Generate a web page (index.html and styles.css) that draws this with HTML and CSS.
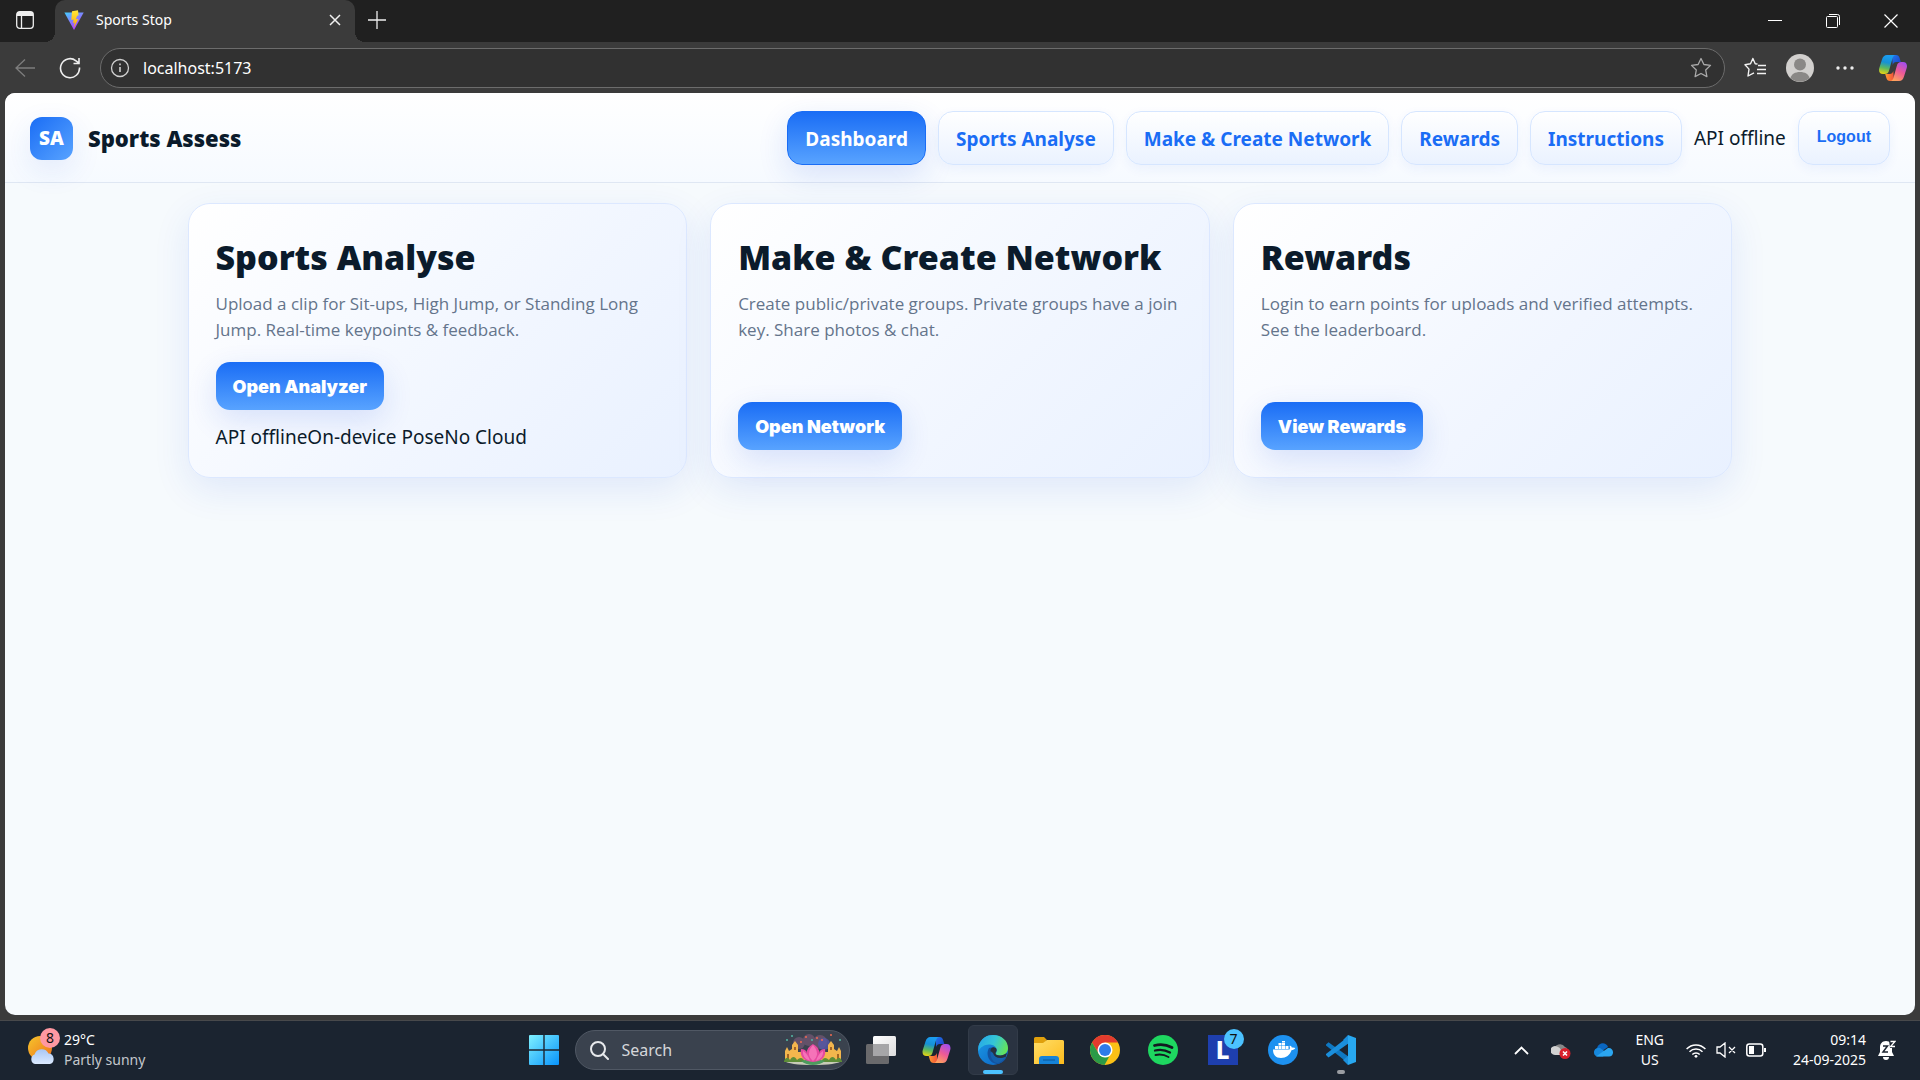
FILE: index.html
```html
<!DOCTYPE html>
<html lang="en">
<head>
<meta charset="utf-8">
<meta name="viewport" content="width=device-width, initial-scale=1">
<title>Sports Stop</title>
<link rel="stylesheet" href="styles.css">
</head>
<body class="desktop">
<svg class="defs" aria-hidden="true">
  <defs>
    <linearGradient id="cpA" x1="0.3" y1="0" x2="0.1" y2="1"><stop offset="0" stop-color="#1b9df0"/><stop offset=".35" stop-color="#1691d6"/><stop offset=".65" stop-color="#5cb860"/><stop offset="1" stop-color="#f5d60b"/></linearGradient>
    <linearGradient id="cpB" x1="0.8" y1="0" x2="0.3" y2="1"><stop offset="0" stop-color="#a24df0"/><stop offset=".5" stop-color="#ee5a96"/><stop offset="1" stop-color="#ffa45c"/></linearGradient>
    <linearGradient id="cpC" x1="0" y1="0" x2="1" y2="1"><stop offset="0" stop-color="#2277ee"/><stop offset="1" stop-color="#1b3fc4"/></linearGradient>
    <linearGradient id="cpD" x1="0" y1="0" x2="1" y2="0"><stop offset="0" stop-color="#ff9a2e"/><stop offset="1" stop-color="#f2503c"/></linearGradient>
    <symbol id="copilot" viewBox="0 0 28 26">
      <path fill="url(#cpC)" d="M13 0h4c2 0 3 1 3.600 3l1.200 4h-4.500c-2 0-3 1-3.600 3z"/>
      <path fill="url(#cpD)" d="M15 26h-4c-2 0-3-1-3.600-3l-1.200-4h4.500c2 0 3-1 3.600-3z"/>
      <path fill="url(#cpA)" d="M8 0h9c-2 0-3 1.300-3.700 4l-3.100 11c-.8 3-2 4-4.500 4H4c-3.300 0-4.600-2.600-3.700-6L3 4.500C3.900 1.500 5.500 0 8 0z"/>
      <path fill="url(#cpB)" d="M20 26h-9c2 0 3-1.300 3.700-4l3.100-11c.8-3 2-4 4.500-4H24c3.300 0 4.600 2.600 3.700 6L25 21.500c-.9 3-2.500 4.500-5 4.500z"/>
    </symbol>
    <linearGradient id="vite" x1="0" y1="0" x2=".6" y2="1"><stop offset="0" stop-color="#41d1ff"/><stop offset="1" stop-color="#bd34fe"/></linearGradient>
    <linearGradient id="bolt" x1="0" y1="0" x2="0" y2="1"><stop offset="0" stop-color="#ffe83a"/><stop offset="1" stop-color="#ffa800"/></linearGradient>
    <linearGradient id="win" x1="0" y1="0" x2="1" y2="1"><stop offset="0" stop-color="#7ff1ff"/><stop offset="1" stop-color="#0893fb"/></linearGradient>
    <linearGradient id="edgeTop" x1="0" y1=".3" x2="1" y2=".6"><stop offset="0" stop-color="#27a9e8"/><stop offset=".5" stop-color="#35c6d6"/><stop offset="1" stop-color="#66e455"/></linearGradient>
    <linearGradient id="edgeMid" x1="0" y1="0" x2="1" y2="1"><stop offset="0" stop-color="#1c9ce8"/><stop offset="1" stop-color="#0b60c0"/></linearGradient>
    <linearGradient id="sun" x1="0" y1="0" x2="1" y2="1"><stop offset="0" stop-color="#f5c62c"/><stop offset="1" stop-color="#f0701c"/></linearGradient>
    <linearGradient id="cloud" x1="0" y1="0" x2="0" y2="1"><stop offset="0" stop-color="#a8c6f5"/><stop offset="1" stop-color="#dceaff"/></linearGradient>
    <linearGradient id="folder" x1="0" y1="0" x2="1" y2="1"><stop offset="0" stop-color="#ffde68"/><stop offset="1" stop-color="#fdbb1c"/></linearGradient>
    <linearGradient id="pane" x1="0" y1="0" x2="1" y2="1"><stop offset="0" stop-color="#fff"/><stop offset="1" stop-color="#dcdcdc"/></linearGradient>
  </defs>
</svg>

<div class="browser">
  <div class="tabs">
    <button class="icon-btn workspace" aria-label="Tab actions"><svg width="18" height="18" viewBox="0 0 18 18" fill="none" stroke="#eee" stroke-width="1.300"><rect x=".7" y=".7" width="16.600" height="16.600" rx="3"/><path d="M1 3h16" stroke-width="4"/><path d="M5.500 4v13"/></svg></button>
    <div class="tab">
      <svg width="20" height="20" viewBox="0 0 20 20"><path fill="url(#vite)" d="M.4 2.400 10 20l9.700-17.600z"/><path fill="url(#bolt)" d="M14 .2 8 1.300 7.300 10l2.300-.5-.6 3.500 1.700-.4-.9 5.200 4.600-9-2.500.5 1.200-3.600 1.500-.3z"/></svg>
      <span class="tab-title">Sports Stop</span>
      <button class="icon-btn" aria-label="Close tab"><svg width="12" height="12" viewBox="0 0 12 12" stroke="#f0f0f0" stroke-width="1.500"><path d="m1 1 10 10M11 1 1 11"/></svg></button>
    </div>
    <button class="icon-btn new-tab" aria-label="New tab"><svg width="18" height="18" viewBox="0 0 18 18" stroke="#eee" stroke-width="1.300"><path d="M9 0v18M0 9h18"/></svg></button>
    <div class="window-controls">
      <button class="icon-btn" aria-label="Minimize"><svg width="14" height="14" viewBox="0 0 14 14" stroke="#fff"><path d="M0 6.500h14"/></svg></button>
      <button class="icon-btn" aria-label="Restore"><svg width="14" height="14" viewBox="0 0 14 14" fill="none" stroke="#fff"><rect x=".5" y="2.500" width="11" height="11" rx="1"/><path d="M3 .5h8.500a2 2 0 0 1 2 2V11"/></svg></button>
      <button class="icon-btn" aria-label="Close"><svg width="14" height="14" viewBox="0 0 14 14" stroke="#fff" stroke-width="1.200"><path d="m.5.500 13 13M13.500.500l-13 13"/></svg></button>
    </div>
  </div>

  <div class="toolbar">
    <button class="icon-btn" aria-label="Back"><svg width="20" height="20" viewBox="0 0 20 20" fill="none" stroke="#7d7d7d" stroke-width="1.300"><path d="M20 10H1M10 1.500 1 10l9 8.500"/></svg></button>
    <button class="icon-btn" aria-label="Refresh"><svg width="22" height="22" viewBox="0 0 22 22" fill="none" stroke="#eee" stroke-width="1.600"><path d="M20.500 10.500A9.500 9.500 0 1 1 17 3.800l3 2.400M20 1v5.500h-5.500"/></svg></button>
    <div class="address">
      <svg width="20" height="20" viewBox="0 0 20 20" fill="none" stroke="#d0d0d0" stroke-width="1.300"><circle cx="10" cy="10" r="8.500"/><path d="M10 9v5M10 5.500v1.800" stroke-width="1.600"/></svg>
      <input class="url" aria-label="Address" value="localhost:5173">
      <svg width="22" height="22" viewBox="0 0 22 22" fill="none" stroke="#aaa" stroke-width="1.300" stroke-linejoin="round"><path d="m11 1.500 2.900 6 6.600.9-4.800 4.600 1.200 6.600L11 16.500l-5.900 3.100L6.300 13 1.500 8.400l6.600-.9z"/></svg>
    </div>
    <div class="toolbar-actions">
      <button class="icon-btn" aria-label="Favorites"><svg width="22" height="22" viewBox="0 0 22 22" fill="none" stroke="#f2f2f2" stroke-width="1.400" stroke-linejoin="round"><path d="m13.500 7-2.300-.2L8.900 1.500 6.500 6.800l-5.500.9 4 4.400-1 6.900 6-3.200M14 8.500h8M13 12.500h9M13 16.500h9"/></svg></button>
      <button class="icon-btn" aria-label="Profile"><svg width="28" height="28" viewBox="0 0 28 28"><circle cx="14" cy="14" r="14" fill="#d2d0ce"/><circle cx="14" cy="10.500" r="6" fill="#8a8886"/><path fill="#8a8886" d="M4.500 24c1-4 4.500-6 9.500-6s8.500 2 9.500 6a14 14 0 0 1-19 0z"/></svg></button>
      <button class="icon-btn" aria-label="Settings and more"><svg width="18" height="4" viewBox="0 0 18 4" fill="#eee"><circle cx="2" cy="2" r="1.700"/><circle cx="9" cy="2" r="1.700"/><circle cx="16" cy="2" r="1.700"/></svg></button>
      <button class="icon-btn" aria-label="Copilot"><svg width="28" height="26"><use href="#copilot"/></svg></button>
    </div>
  </div>

  <div class="page">
    <header class="site-header">
      <div class="brand"><span class="logo">SA</span><span>Sports Assess</span></div>
      <nav class="nav">
        <a class="nav-link active" href="#dashboard">Dashboard</a>
        <a class="nav-link" href="#analyse">Sports Analyse</a>
        <a class="nav-link" href="#network">Make &amp; Create Network</a>
        <a class="nav-link" href="#rewards">Rewards</a>
        <a class="nav-link" href="#instructions">Instructions</a>
        <span>API offline</span>
        <button class="nav-link logout">Logout</button>
      </nav>
    </header>
    <main class="cards">
      <section class="card">
        <h2>Sports Analyse</h2>
        <p>Upload a clip for Sit-ups, High Jump, or Standing Long Jump. Real-time keypoints &amp; feedback.</p>
        <button class="cta">Open Analyzer</button>
        <div class="badges"><span>API offline</span><span>On-device Pose</span><span>No Cloud</span></div>
      </section>
      <section class="card">
        <h2>Make &amp; Create Network</h2>
        <p>Create public/private groups. Private groups have a join key. Share photos &amp; chat.</p>
        <button class="cta">Open Network</button>
      </section>
      <section class="card">
        <h2>Rewards</h2>
        <p>Login to earn points for uploads and verified attempts. See the leaderboard.</p>
        <button class="cta">View Rewards</button>
      </section>
    </main>
  </div>
</div>

<footer class="taskbar">
  <div class="weather">
    <div class="badged">
      <svg width="28" height="28" viewBox="0 0 28 28"><circle cx="12" cy="12" r="12" fill="url(#sun)"/><path fill="url(#cloud)" d="M7 28a5 5 0 0 1-.5-9.500 7.500 7.500 0 0 1 14-1A5.400 5.400 0 0 1 22 28z"/></svg>
      <span class="badge pink">8</span>
    </div>
    <div class="weather-text"><span>29°C</span><span class="dim">Partly sunny</span></div>
  </div>
  <div class="apps">
    <button class="app" aria-label="Start"><svg width="30" height="30" viewBox="0 0 30 30"><path fill="url(#win)" d="M1 0h13.300v14.300H0V1a1 1 0 0 1 1-1zM15.700 0H29a1 1 0 0 1 1 1v13.300H15.700zM0 15.700h14.300V30H1a1 1 0 0 1-1-1zM15.700 15.700H30V29a1 1 0 0 1-1 1H15.700z"/></svg></button>
    <label class="search">
      <svg width="19" height="19" viewBox="0 0 19 19" fill="none" stroke="#e8eaed" stroke-width="2" stroke-linecap="round"><circle cx="8" cy="8" r="7"/><path d="m13 13 5 5"/></svg>
      <input type="text" placeholder="Search" aria-label="Search">
      <svg width="58" height="32" viewBox="0 0 58 32">
        <g fill="#7a5a78" opacity=".65"><circle cx="15" cy="9" r="6"/><circle cx="25" cy="6" r="6"/><circle cx="36" cy="8" r="7"/></g>
        <circle cx="40" cy="10" r="6" fill="#5557a8" opacity=".8"/>
        <ellipse cx="29" cy="27.500" rx="27" ry="3.500" fill="#c8cbb7"/>
        <path fill="#f3b64d" d="M1 27V17l2-4 2 4 3-2v-4l3-4 3 4v16zM57 27V17l-2-4-2 4-3-2v-4l-3-4-3 4v16z"/>
        <path fill="#f3b64d" d="M13 27v-9h8v9zM37 27v-9h8v9z"/>
        <path fill="#a56424" d="M10 13h2v3h-2zM46 13h2v3h-2zM3 20h2v5H3zM53 20h2v5h-2z"/>
        <path fill="#5d8d38" d="M0 27c2-4 4-4 6-1 2-4 5-4 7 0 3-3 6-3 8 2H0zM58 27c-2-4-4-4-6-1-2-4-5-4-7 0-3-3-6-3-8 2h21z"/>
        <path fill="#4d9b5e" d="M17 27q12-4 24 0-5 4-12 4t-12-4z"/>
        <path fill="#e64aa0" d="M29 28Q15 27 17 15q5 0 6 4-1-5 6-9 7 4 6 9 1-4 6-4 2 12-12 13z"/>
        <path fill="#f573b8" d="M29 27q-8-7 0-16 8 9 0 16zM19 17q-1 7 7 10-2-7-7-10zM39 17q1 7-7 10 2-7 7-10z"/>
        <g fill="#f06a50"><circle cx="17" cy="8" r="1"/><circle cx="22" cy="3" r="1"/><circle cx="33" cy="4" r="1"/><circle cx="47" cy="1" r="1"/><circle cx="38" cy="6" r="1"/></g>
        <g fill="#53b9a4"><circle cx="8" cy="2" r="1"/><circle cx="28" cy="6" r="1"/><circle cx="3" cy="6" r="1"/><circle cx="56" cy="6" r="1"/></g>
      </svg>
    </label>
    <button class="app" aria-label="Task view"><svg width="30" height="28" viewBox="0 0 30 28"><rect y="8" width="23" height="20" rx="1.500" fill="#6a6a6c"/><rect x="7" width="23" height="20" rx="1.500" fill="url(#pane)"/><path fill="#a6a6a8" d="M7 8h16v12H7z"/></svg></button>
    <button class="app" aria-label="Copilot"><svg width="29" height="26"><use href="#copilot"/></svg></button>
    <button class="app running" aria-label="Microsoft Edge"><svg width="30" height="30" viewBox="0 0 30 30"><circle cx="15" cy="15" r="15" fill="url(#edgeMid)"/><path fill="#14529f" d="M11 13c-4 7 1 16 9 16 4-1 7-4 8-6-6 2-11 0-13-4-1-2-1-4 1-7z"/><path fill="url(#edgeTop)" d="M.5 11C3 3 9 0 15 0c9 0 15 6 15 13 0 5-4 7.500-8 7.500-3 0-5-1.200-4-2.500 2-3 0-8-6-8.500C7 9 2.500 12 .3 16z"/><path fill="#27303d" d="M12.500 15c1-4 6-3.500 6.200 0 .1 1.500-1.200 2.200-1.200 3.200 0 1.800 4 3 7.500 1.800l4-2-1.500 4.500c-6 3.500-15.500-.5-15-7.500z"/><path fill="#1460ad" d="M15 18c1.500 5 7 6.500 12.800 3.700C25 26 21 28 19 28c-5-1-7-7-6.500-12z"/></svg></button>
    <button class="app" aria-label="File Explorer"><svg width="30" height="27" viewBox="0 0 30 27"><path fill="#e0a00c" d="M0 1.500A1.500 1.500 0 0 1 1.500 0H10l3 3-3 4H0z"/><path fill="url(#folder)" d="M0 6h9l4-3h15.500A1.500 1.500 0 0 1 30 4.500V27H0z"/><path fill="#1683d8" d="M5 27v-5a3 3 0 0 1 3-3h14a3 3 0 0 1 3 3v5z"/><path stroke="#0b5798" d="M9 23h12"/></svg></button>
    <button class="app" aria-label="Google Chrome"><svg width="30" height="30" viewBox="0 0 30 30"><circle cx="15" cy="15" r="15" fill="#fbc116"/><path fill="#e33b2e" d="M2 7.500A15 15 0 0 1 28 7.500H15L9 19z"/><path fill="#2b9a47" d="M2 7.500 9 19q3 4 10 3l-4.500 8A15 15 0 0 1 2 7.500z"/><circle cx="15" cy="15" r="7.500" fill="#fff"/><circle cx="15" cy="15" r="6" fill="#2f7bea"/></svg></button>
    <button class="app wide" aria-label="Spotify"><svg width="30" height="30" viewBox="0 0 30 30" fill="none" stroke="#121a20" stroke-linecap="round"><circle cx="15" cy="15" r="15" fill="#1ed760" stroke="none"/><path d="M6.500 10.500q9-2.500 17.500 2" stroke-width="2.800"/><path d="M7 15.500q8-2 15 2" stroke-width="2.300"/><path d="M7.500 20q7-1.500 13 2" stroke-width="1.900"/></svg></button>
    <button class="app wide" aria-label="L"><span class="badged"><span class="letter">L</span><span class="badge blue">7</span></span></button>
    <button class="app wide" aria-label="Docker"><svg width="30" height="30" viewBox="0 0 30 30"><circle cx="15" cy="15" r="15" fill="#1d91f0"/><path fill="#fff" d="M5 14.500h16.500c.6-1 .5-2.600 0-3.500 1-.8 2 .3 2.300 1.500 1.500-.3 2.700 0 3.500.6-.8 1.600-2.200 2-3.600 2-2 5.300-5.500 7.900-10.700 7.900-5.300 0-8-3-8-8.500zM7 11h3v3H7zM10.500 11h3v3h-3zM14 11h3v3h-3zM17.500 11h3v3h-3zM10.500 8h3v2.600h-3zM14 8h3v2.600h-3zM14 6h3v1.600h-3z"/></svg></button>
    <button class="app idle" aria-label="Visual Studio Code"><svg width="30" height="30" viewBox="0 0 30 30"><path fill="#0f78c2" d="m0 9.500 2.500-2.300L23 22v7L0 10.500z"/><path fill="#1b8fdc" d="m0 20 2.500 2.500L23 8V1L0 19z"/><path fill="#28a8f0" d="m22 0 8 3v24l-8 3z"/><path fill="#1b8fdc" d="m22 0-5 5 5 4zM22 30l-5-5 5-4z"/></svg></button>
  </div>
  <div class="tray">
    <svg width="15" height="9" viewBox="0 0 15 9" fill="none" stroke="#fff" stroke-width="1.800"><path d="m1 8 6.500-6.500L14 8"/></svg>
    <svg width="20" height="17" viewBox="0 0 20 17"><path fill="#888" d="M3 8a6 6 0 0 1 11-3c3 1 3 4 2 7H9z"/><path fill="#d2d2d2" d="M4 13a4.500 4.500 0 1 1 2-8.500Q9 5 10 8l3 5z"/><circle cx="14" cy="11.500" r="5.500" fill="#d8202b"/><path stroke="#fff" stroke-width="1.500" d="m12 9.500 4 4m0-4-4 4"/></svg>
    <svg width="20" height="14" viewBox="0 0 20 14"><path fill="#0a66c0" d="M4 5C6-1 13-1 15 4l-6 4z"/><path fill="#1688dc" d="M4 13.500a4.500 4.500 0 1 1 3-8.500l7 5-4 3.500z"/><path fill="#2ba6f0" d="M3 13.500 15 5c6-1 7 8.500 1 8.500z"/></svg>
    <div class="stack center"><span>ENG</span><span>US</span></div>
    <div class="status">
      <svg width="20" height="15" viewBox="0 0 20 15" fill="none" stroke="#fff" stroke-width="1.500"><path d="M.6 6a13 13 0 0 1 18.800 0M3.500 8.800a9.200 9.200 0 0 1 13 0M6.300 11.500a5.200 5.200 0 0 1 7.400 0"/><circle cx="10" cy="13.300" r="1.400" fill="#fff" stroke="none"/></svg>
      <svg width="20" height="16" viewBox="0 0 20 16" fill="none" stroke="#fff" stroke-width="1.300"><path d="M1 5h3l5-4v14l-5-4H1zM13 5l6 6m0-6-6 6"/></svg>
      <svg width="20" height="14" viewBox="0 0 20 14" fill="none" stroke="#fff" stroke-width="1.500"><rect x=".8" y="1" width="16" height="12" rx="2.500"/><path d="M19 5v4" stroke-width="2"/><path fill="#fff" stroke="none" d="M3 3h5v8H3z"/></svg>
    </div>
    <div class="stack end"><span>09:14</span><span>24-09-2025</span></div>
    <svg width="18" height="20" viewBox="0 0 18 20"><path fill="#fff" d="M8 1C4 1 2 4 2 7v5l-2 4h16l-2-4V7c0-3-2-6-6-6zM5 17h6a3 3 0 0 1-6 0z"/><path fill="#1c2430" d="M11 0h7v8h-6z"/><path fill="none" stroke="#1c2430" stroke-width="1.500" d="M5 6h4.500L5 12h5"/><path fill="none" stroke="#fff" stroke-width="1.300" d="M12.500 1.500H17l-4.500 5H17"/></svg>
  </div>
</footer>
</body>
</html>
```

FILE: styles.css
```css
* { box-sizing: border-box; }

body.desktop {
  margin: 0;
  min-height: 100vh;
  display: flex;
  flex-direction: column;
  font-family: "Noto Sans", "Open Sans", sans-serif;
  color: #0b1b2b;
  background: #3b3b3b;
}

button, input { font: inherit; }
.defs { position: absolute; width: 0; height: 0; }
svg { display: block; flex: none; }

.icon-btn {
  display: grid;
  place-items: center;
  padding: 0;
  border: 0;
  background: none;
}

/* Browser window */
.browser {
  flex: 1;
  display: flex;
  flex-direction: column;
  padding-bottom: 5px;
  border-bottom: 1px solid #48494b;
}

.tabs {
  display: flex;
  height: 42px;
  background: #202020;
  color: #fff;
}
.workspace { width: 50px; margin-right: 5px; padding-bottom: 2px; }
.tab {
  position: relative;
  display: flex;
  align-items: center;
  gap: 12px;
  width: 300px;
  padding: 0 14px 3px 9px;
  border-radius: 10px 10px 0 0;
  background: #3b3b3b;
}
.tab::before, .tab::after {
  content: "";
  position: absolute;
  bottom: 0;
  width: 10px;
  height: 10px;
}
.tab::before { right: 100%; background: radial-gradient(circle at 0 0, #202020 10px, #3b3b3b 10px); }
.tab::after { left: 100%; background: radial-gradient(circle at 100% 0, #202020 10px, #3b3b3b 10px); }
.tab-title { flex: 1; font-size: 14px; }
.new-tab { width: 44px; padding-bottom: 3px; }
.window-controls { display: flex; margin-left: auto; }
.window-controls .icon-btn { width: 58px; }

.toolbar {
  display: flex;
  align-items: center;
  height: 51px;
  padding: 0 13px 0 15px;
}
.toolbar > .icon-btn { width: 20px; margin-right: 24px; }
.toolbar > .icon-btn + .icon-btn { width: 22px; margin-right: 19px; }
.address {
  flex: 1;
  display: flex;
  align-items: center;
  gap: 13px;
  height: 40px;
  padding: 0 12px 0 9px;
  border: 1px solid #6c6c6c;
  border-radius: 20px;
  background: #313131;
}
.url {
  flex: 1;
  padding: 0;
  border: 0;
  outline: 0;
  background: none;
  color: #fff;
  font-size: 16px;
}
.toolbar-actions { display: flex; align-items: center; margin-left: 19px; gap: 20px; }
.toolbar-actions .icon-btn:nth-child(3) { width: 22px; }
.toolbar-actions .icon-btn:last-child { margin-left: 3px; }

/* Site */
.page {
  flex: 1;
  margin: 0 5px;
  overflow: hidden;
  border-radius: 10px;
  background: #f6fafd;
  font-size: 19px;
}
.site-header {
  display: flex;
  align-items: center;
  justify-content: space-between;
  padding: 18px 25px 17px;
  border-bottom: 1px solid #dfe7f3;
  background: linear-gradient(#fff, #f6faff);
}
.brand {
  display: flex;
  align-items: center;
  gap: 15px;
  font-size: 22px;
  font-weight: 900;
}
.logo {
  display: grid;
  place-items: center;
  width: 43px;
  height: 43px;
  border-radius: 12px;
  background: linear-gradient(135deg, #1a6df5, #58a3ff);
  box-shadow: 0 10px 30px rgba(26, 80, 220, .1);
  color: #fff;
  font-size: 19px;
}
.nav { display: flex; align-items: center; gap: 12px; }
.nav-link {
  display: flex;
  align-items: center;
  height: 54px;
  padding: 2px 17px 0;
  border: 1px solid #d6e6ff;
  border-radius: 15px;
  background: linear-gradient(#fff, #eaf2ff);
  box-shadow: 0 4px 12px rgba(26, 80, 220, .06);
  color: #1a6df5;
  font-weight: 700;
  text-decoration: none;
}
.nav-link.active {
  border-color: #1a6df5;
  background: linear-gradient(#1a6df5, #58a3ff);
  box-shadow: 0 10px 30px rgba(26, 80, 220, .14);
  color: #fff;
}
.logout {
  padding: 0 18px 2px;
  font-family: "Liberation Sans", sans-serif;
  font-size: 16px;
}

.cards {
  display: grid;
  grid-template-columns: repeat(3, 1fr);
  gap: 23px;
  max-width: 1545px;
  margin: 0 auto;
  padding: 20px 0;
}
.card {
  display: flex;
  flex-direction: column;
  align-items: flex-start;
  min-height: 275px;
  padding: 27px;
  border: 1px solid #dce8ff;
  border-radius: 22px;
  background: linear-gradient(135deg, #fff, #f1f6ff 60%, #e9f1ff);
  box-shadow: 0 12px 36px rgba(26, 80, 220, .1);
}
.card h2 {
  margin: 0 0 8px;
  font-size: 34px;
  line-height: 52px;
  font-weight: 900;
}
.card p {
  margin: 0 0 18px;
  color: #64748b;
  font-family: "Open Sans", sans-serif;
  font-size: 17px;
  line-height: 26px;
}
.cta {
  height: 48px;
  margin-top: auto;
  padding: 0 17px;
  border: 0;
  border-radius: 14px;
  background: linear-gradient(#1a6df5, #58a3ff);
  box-shadow: 0 10px 30px rgba(26, 80, 220, .14);
  color: #fff;
  font-family: Inter, sans-serif;
  font-size: 18px;
  font-weight: 900;
}
.badges { margin-top: 14px; line-height: 26px; }

/* Taskbar */
.taskbar {
  display: grid;
  grid-template-columns: 1fr auto 1fr;
  align-items: center;
  height: 59px;
  padding-bottom: 1px;
  background: #1b2430;
  color: #fff;
  font-size: 14px;
  line-height: 20px;
}
.weather { display: flex; align-items: center; gap: 8px; padding-left: 28px; }
.weather-text, .stack { display: flex; flex-direction: column; }
.dim { color: #c3c7cc; }
.badged { position: relative; display: block; }
.badge {
  position: absolute;
  top: -8px;
  right: -4px;
  width: 20px;
  height: 20px;
  border-radius: 50%;
  color: #111;
  font-size: 14px;
  line-height: 20px;
  text-align: center;
}
.pink { background: #ff98a2; }
.blue { background: #4cc2ff; top: -6px; right: -6px; }
.apps { display: flex; align-items: center; gap: 6px; margin-right: 36px; }
.app {
  position: relative;
  display: grid;
  place-items: center;
  width: 50px;
  height: 50px;
  padding: 0;
  border: 1px solid transparent;
  border-radius: 6px;
  background: none;
}
.wide { width: 54px; }
.running { border-color: #323b48; background: #2a3341; }
.running::after, .idle::after {
  content: "";
  position: absolute;
  bottom: 0;
  width: 20px;
  height: 4px;
  border-radius: 2px;
  background: #4cc2ff;
}
.idle::after { width: 8px; background: #9a9da2; }
.letter {
  display: grid;
  place-items: center;
  width: 30px;
  height: 30px;
  background: #1e3fae;
  color: #fff;
  font-size: 24px;
  font-weight: 800;
}
.search {
  display: flex;
  align-items: center;
  gap: 13px;
  width: 275px;
  height: 40px;
  padding: 0 7px 0 14px;
  border: 1px solid #505864;
  border-radius: 20px;
  background: #3a424e;
}
.search input {
  flex: 1;
  min-width: 0;
  padding: 0;
  border: 0;
  background: none;
  font-size: 16px;
}
.search input::placeholder { color: #d5d7da; opacity: 1; }
.tray {
  display: flex;
  align-items: center;
  justify-content: flex-end;
  gap: 22px;
  padding-right: 24px;
}
.center { align-items: center; }
.end { align-items: flex-end; min-width: 78px; }
.status { display: flex; align-items: center; gap: 10px; }
.tray .end { margin-right: -10px; }
```
